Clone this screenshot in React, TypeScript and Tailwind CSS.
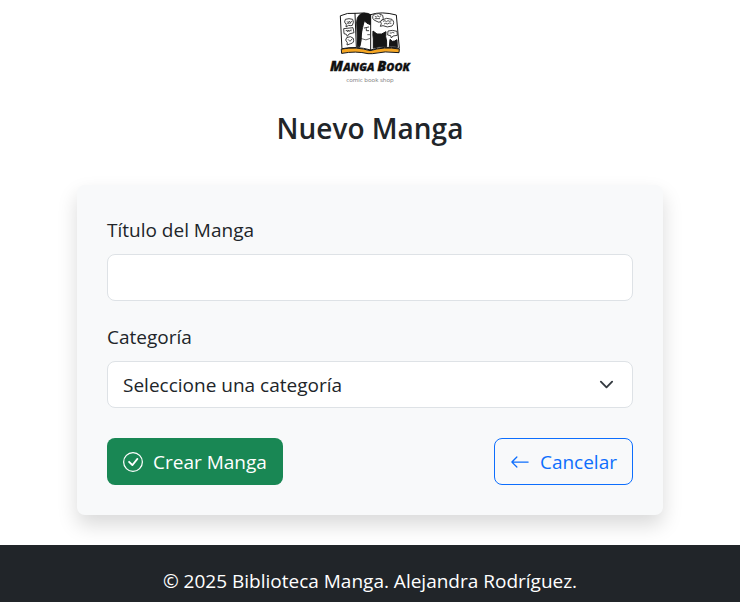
import { BsArrowLeft, BsCheckCircle } from "react-icons/bs";

function Logo() {
  return (
    <svg viewBox="0 0 300 300" className="size-[100px]" role="img" aria-label="Manga Book, comic book shop">
      <g stroke="#161616" strokeWidth="3" strokeLinejoin="round" strokeLinecap="round">
        <path d="M65 147 Q110 139 150 152 Q192 139 238 147 L237 158 Q195 152 157 161 L144 161 Q108 152 66 160Z" fill="#f5a623" />
        <path d="M62 47 Q82 37 105 40 Q132 36 152 44 Q184 33 229 45 L238 145 Q190 137 152 150 Q108 137 67 146Z" fill="#fff" />
        <path d="M105 40 L109 140" fill="none" />
        <path d="M113 140 L110 65 Q112 41 133 39 Q144 39 151 44 L151 74 Q139 71 133 62 Q125 80 124 105 Q124 119 119 140Z" fill="#161616" />
        <path d="M132 65 Q130 80 122 102 Q126 116 121 136 M149 116 Q139 124 124 116 M143 104 L149 104" fill="none" strokeWidth="2" />
        <path d="M133 84 L146 81 M139 86 L139 92 L146 92" fill="none" strokeWidth="2.5" />
        <path d="M152 44 L152 150" fill="none" strokeWidth="3" />
        <path d="M160 141 L160 117 Q158 105 159 93 L171 102 L185 102 L198 95 L197 110 Q201 121 200 140 Q178 138 160 144Z" fill="#161616" />
        <path d="M208 139 L210 118 L217 124 L224 123 L231 119 L232 141Z" fill="#161616" />
      </g>
      <g fill="#fff" stroke="#222" strokeWidth="2.6" strokeLinejoin="round">
        <path d="M76 58 Q87 54 98 58 Q103 66 97 76 Q90 78 86 76 L78 81 L79 74 Q70 66 76 58Z" />
        <path d="M71 86 L99 83 L102 98 L87 102 L82 109 L79 103 L72 101Z" />
        <path d="M80 113 Q92 106 100 115 Q104 129 92 131 L81 135 L82 128 Q73 120 80 113Z" />
        <path d="M161 43 Q177 37 188 46 Q194 56 183 63 L177 67 L168 63 Q152 57 161 43Z" />
        <path d="M186 60 Q199 51 216 58 Q226 68 216 78 Q201 84 189 77 L181 79 L184 71 Q178 65 186 60Z" />
        <path d="M204 93 Q218 89 231 94 L232 106 L219 108 L214 114 L212 107 L203 105Z" />
      </g>
      <path
        d="M81 64 l4 4 3-5 4 5 4-5 M80 70 l13-1 M77 92 l5-1 0 4 5-5 0 5 6-6 0 5 M84 118 l6 6 7-8 M164 48 l5 4 4-5 5 4 5-4 M164 56 l16 0 M189 64 l6-2 4 3 5-3 5 2 6-2 M192 72 l5-2 5 2 6-3 6 1 M209 99 l5 0 4-2 5 2"
        fill="none" stroke="#222" strokeWidth="2.3"
      />
      <g fontFamily="'Open Sans', sans-serif" textAnchor="middle">
        <text x="150" y="213" fontSize="33" fontWeight="800" fontStyle="italic" fill="#111" stroke="#111" strokeWidth="1">
          <tspan fontSize="43">M</tspan>ANGA <tspan fontSize="43">B</tspan>OOK
        </text>
        <text x="150" y="247" fontSize="18" fill="#777">comic book shop</text>
      </g>
    </svg>
  );
}

export default function App() {
  return (
    <div className="min-h-screen bg-white font-['Open_Sans',sans-serif] text-[19px] leading-[30px] text-[#212529]">
      <header className="flex flex-col items-center">
        <Logo />
        <h1 className="mt-2.5 text-[28px] leading-9 font-semibold">Nuevo Manga</h1>
      </header>
      <main className="px-5 pt-[39px] pb-[30px]">
        <form
          className="mx-auto max-w-[586px] rounded-lg bg-[#f8f9fa] p-[30px] shadow-[0_10px_20px_rgba(0,0,0,0.15)]"
          onSubmit={(event) => event.preventDefault()}
        >
          <label htmlFor="title" className="mb-[9px] block">Título del Manga</label>
          <input id="title" type="text" className="block h-[47px] w-full rounded-lg border border-[#dee2e6] bg-white px-[15px]" />
          <label htmlFor="category" className="mt-[21px] mb-[9px] block">Categoría</label>
          <div className="relative">
            <select id="category" defaultValue="" className="block h-[47px] w-full appearance-none rounded-lg border border-[#dee2e6] bg-white pr-12 pl-[15px]">
              <option value="">Seleccione una categoría</option>
            </select>
            <svg viewBox="0 0 16 16" className="pointer-events-none absolute top-4 right-[19px] size-[15px]" aria-hidden="true">
              <path d="m2 5 6 6 6-6" fill="none" stroke="#343a40" strokeWidth="2" strokeLinecap="round" strokeLinejoin="round" />
            </svg>
          </div>
          <div className="mt-[30px] flex justify-between">
            <button type="submit" className="flex h-[47px] items-center gap-2.5 rounded-lg bg-[#198754] px-4 text-white">
              <BsCheckCircle className="size-5" />
              Crear Manga
            </button>
            <button type="button" className="flex h-[47px] items-center gap-2.5 rounded-lg border border-[#0d6efd] px-[15px] text-[#0d6efd]">
              <BsArrowLeft className="size-5" />
              Cancelar
            </button>
          </div>
        </form>
      </main>
      <footer className="bg-[#212529] pt-[21px] pb-1.5 text-center text-white">
        © 2025 Biblioteca Manga. Alejandra Rodríguez.
      </footer>
    </div>
  );
}
